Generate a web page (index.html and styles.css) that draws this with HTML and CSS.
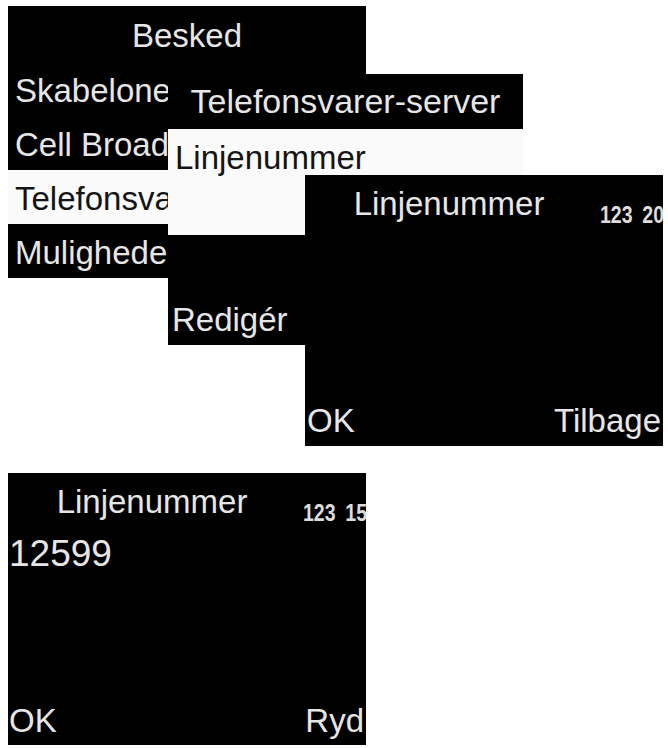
FILE: index.html
```html
<!DOCTYPE html>
<html lang="da">
<head>
<meta charset="utf-8">
<title>Telefonsvarer</title>
<link rel="stylesheet" href="styles.css">
</head>
<body>
<div class="canvas">
  <section class="screen s1">
    <div class="title">Besked</div>
    <div class="row">Skabeloner</div>
    <div class="row">Cell Broadcast</div>
    <div class="row row-sel">Telefonsvarer</div>
    <div class="row">Muligheder</div>
  </section>

  <section class="screen s2">
    <div class="title title-s2">Telefonsvarer-server</div>
    <div class="sel-block">
      <div class="row">Linjenummer</div>
    </div>
    <div class="spacer"></div>
    <div class="softkeys softkeys-s2"><span>Redigér</span></div>
  </section>

  <section class="screen s3">
    <header class="head">
      <span class="head-title">Linjenummer</span>
      <span class="ind"><span class="ind-text">123 20</span></span>
    </header>
    <div class="spacer"></div>
    <div class="softkeys"><span>OK</span><span>Tilbage</span></div>
  </section>

  <section class="screen s4">
    <header class="head">
      <span class="head-title">Linjenummer</span>
      <span class="ind"><span class="ind-text">123 15</span></span>
    </header>
    <div class="number">12599</div>
    <div class="spacer"></div>
    <div class="softkeys softkeys-s4"><span>OK</span><span>Ryd</span></div>
  </section>
</div>
</body>
</html>
```

FILE: styles.css
```css
html, body {
  margin: 0;
  padding: 0;
  background: #ffffff;
}

.canvas {
  position: relative;
  width: 668px;
  height: 748px;
  overflow: hidden;
  font-family: "Liberation Sans", Arial, sans-serif;
}

.screen {
  position: absolute;
  box-sizing: border-box;
  display: flex;
  flex-direction: column;
  background: #000000;
  color: #e6e6e6;
  font-size: 33px;
  overflow: hidden;
  white-space: nowrap;
}

.s1 { left: 8px;   top: 6px;   width: 358px; height: 272px; }
.s2 { left: 168px; top: 74px;  width: 355px; height: 271px; }
.s3 { left: 305px; top: 175px; width: 358px; height: 271px; }
.s4 { left: 8px;   top: 473px; width: 358px; height: 272px; }

.title {
  box-sizing: border-box;
  height: 56px;
  padding-top: 6px;
  line-height: 48px;
  text-align: center;
}

.title-s2 {
  height: 55px;
  padding-top: 3px;
  font-size: 34px;
}

.row {
  box-sizing: border-box;
  height: 54px;
  padding: 5px 0 0 7px;
  line-height: 48px;
  overflow: hidden;
}

.row-sel {
  background: #fafafa;
  color: #141414;
}

.sel-block {
  height: 106px;
  background: #fafafa;
  color: #141414;
  flex-shrink: 0;
}

.spacer {
  flex: 1;
}

.softkeys {
  display: flex;
  justify-content: space-between;
  padding: 0 2px 5px 2px;
  line-height: 40px;
}

.softkeys-s2 {
  padding-left: 4px;
}

.softkeys-s4 {
  padding: 0 2px 4px 1px;
}

.head {
  display: flex;
  align-items: flex-start;
  height: 53px;
}

.head-title {
  flex: 1;
  min-width: 0;
  padding-top: 5px;
  line-height: 48px;
  text-align: center;
}

.ind {
  flex: 0 0 70px;
  width: 70px;
  min-width: 0;
  box-sizing: border-box;
  padding: 28px 0 0 7px;
  font-size: 23px;
  font-weight: 700;
  line-height: 24px;
  color: #dcdcdc;
}

.ind-text {
  display: inline-block;
  transform: scaleX(0.85);
  transform-origin: left center;
  word-spacing: 5px;
}

.number {
  margin-top: 6px;
  padding-left: 1px;
  font-size: 37px;
  line-height: 44px;
}
```
